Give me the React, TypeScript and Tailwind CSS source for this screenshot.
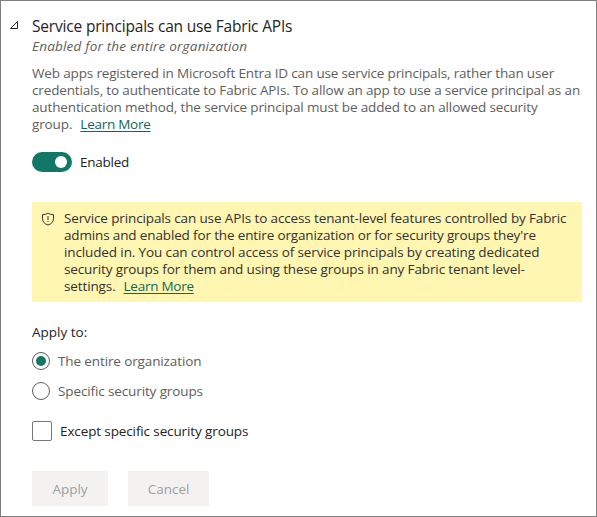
import { useState } from "react";

const description = [
  { text: "Web apps registered in Microsoft Entra ID can use service principals, rather than user", tracking: "tracking-[-0.155px]" },
  { text: "credentials, to authenticate to Fabric APIs. To allow an app to use a service principal as an", tracking: "tracking-[-0.145px]" },
  { text: "authentication method, the service principal must be added to an allowed security", tracking: "tracking-[-0.135px]" },
];

const notice = [
  { text: "Service principals can use APIs to access tenant-level features controlled by Fabric", tracking: "tracking-[-0.128px]" },
  { text: "admins and enabled for the entire organization or for security groups they're", tracking: "tracking-[-0.145px]" },
  { text: "included in. You can control access of service principals by creating dedicated", tracking: "tracking-[-0.121px]" },
  { text: "security groups for them and using these groups in any Fabric tenant level-", tracking: "tracking-[-0.121px]" },
];

function LearnMore() {
  return (
    <a href="#" className="ml-2 tracking-[-0.26px] text-[#0c695a] underline decoration-1 underline-offset-2">
      Learn More
    </a>
  );
}

function Radio({ label, checked, onSelect }: { label: string; checked: boolean; onSelect: () => void }) {
  return (
    <button type="button" role="radio" aria-checked={checked} onClick={onSelect} className="flex h-[18px] items-center">
      <span className="flex size-[18px] items-center justify-center rounded-full border border-[#605e5c]">
        {checked && <span className="size-[10px] rounded-full bg-[#117865]" />}
      </span>
      <span className="ml-2 leading-[18px] text-[#605e5c]">{label}</span>
    </button>
  );
}

export default function App() {
  const [scope, setScope] = useState("all");
  return (
    <main className="flex h-[517px] w-[597px] border border-[#7f7f7f] bg-white pl-2 font-['Open_Sans','Noto_Sans',sans-serif] text-[13.5px] leading-[17px] tracking-[-0.12px] whitespace-nowrap text-[#252423]">
      <svg className="mt-[19px] h-[10px] w-[10px] shrink-0" viewBox="0 0 10 10" fill="none" stroke="#252423">
        <path d="M1.5 8.5 8.5 1.5V8.5Z" />
      </svg>
      <section className="ml-[13px] flex w-[550px] flex-col items-start">
        <h1 className="mt-[15px] text-[15.5px] leading-[21px] tracking-[-0.18px]">Service principals can use Fabric APIs</h1>
        <p className="mt-px text-[13.5px] leading-[17px] tracking-[0.2px] text-[#605e5c] italic">Enabled for the entire organization</p>
        <div className="mt-[10px] text-[#605e5c]">
          {description.map((line) => (
            <p key={line.text} className={line.tracking}>{line.text}</p>
          ))}
          <p>group.<LearnMore /></p>
        </div>
        <div className="mt-[19px] flex h-5 items-center">
          <span className="flex h-5 w-10 items-center justify-end rounded-full bg-[#117865] pr-[5px]">
            <span className="size-3 rounded-full bg-white" />
          </span>
          <span className="mt-px ml-2 tracking-[-0.25px]">Enabled</span>
        </div>
        <div className="mt-[30px] flex h-[100px] w-full bg-[#fff6b2] pt-2 pl-[9px] text-[#323130]">
          <svg className="mt-[2px] size-[14px] shrink-0" viewBox="0 0 14 14" fill="none" stroke="#323130" strokeLinejoin="round">
            <path d="M7 1C5.4 2.2 3.5 2.7 1.5 2.7V6.5C1.5 9.8 3.5 11.9 7 13C10.5 11.9 12.5 9.8 12.5 6.5V2.7C10.5 2.7 8.6 2.2 7 1Z" />
            <path d="M7 4V8M7 9V10" />
          </svg>
          <div className="ml-[9px]">
            {notice.map((line) => (
              <p key={line.text} className={line.tracking}>{line.text}</p>
            ))}
            <p>settings.<LearnMore /></p>
          </div>
        </div>
        <h2 className="mt-[22px] tracking-normal">Apply to:</h2>
        <div role="radiogroup" className="mt-[11px] flex flex-col gap-3">
          <Radio label="The entire organization" checked={scope === "all"} onSelect={() => setScope("all")} />
          <Radio label="Specific security groups" checked={scope === "groups"} onSelect={() => setScope("groups")} />
        </div>
        <label className="mt-[21px] flex h-5 items-center">
          <span className="size-5 rounded-[2px] border border-[#797775]" />
          <span className="ml-2">Except specific security groups</span>
        </label>
        <div className="mt-[30px] flex gap-5 tracking-normal text-[#a19f9d]">
          <button type="button" disabled className="h-[35px] w-[76px] bg-[#f3f2f1] pt-px">Apply</button>
          <button type="button" disabled className="h-[35px] w-[81px] bg-[#f3f2f1] pt-px">Cancel</button>
        </div>
      </section>
    </main>
  );
}
